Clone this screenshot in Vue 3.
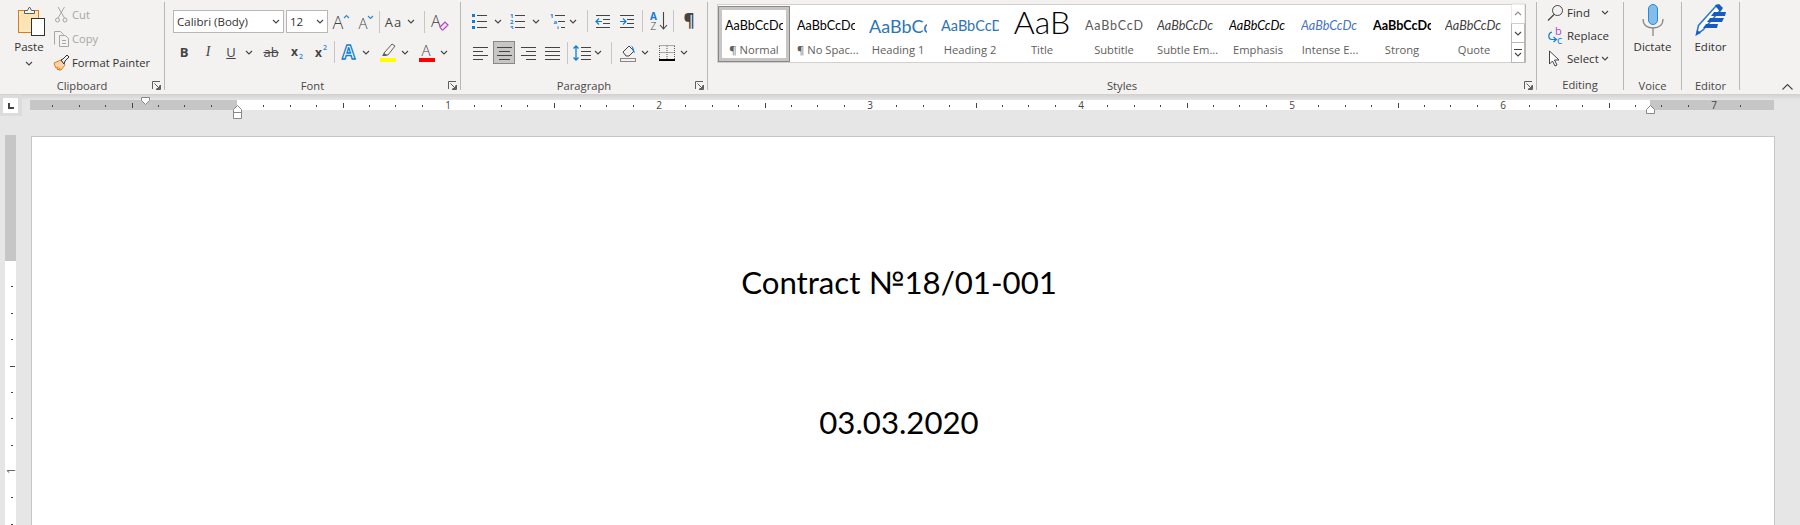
<template>
  <div class="word">
    <svg class="sprite" width="0" height="0">
      <symbol id="chev" viewBox="0 0 8 5"><path d="M1 1l3 3 3-3" fill="none" stroke="#444" stroke-width="1.1"/></symbol>
      <symbol id="launch" viewBox="0 0 9 9"><path d="M.5 8V.5H8M8.5 4v4.5H4M2.5 2.5l5 5M7.5 4.5v3h-3" fill="none" stroke="#605e5c"/></symbol>
    </svg>

    <div class="ribbon">
      <!-- Clipboard -->
      <section class="group clipboard">
        <div class="body clip-body">
          <div class="paste">
            <svg class="paste-icon" width="32" height="31" viewBox="0 0 32 31">
              <rect x="4.5" y="5.5" width="20" height="22" fill="#fdeac3" stroke="#e07a16"/>
              <path d="M7 8h16v17H7z" fill="#fbe3b4"/>
              <path d="M10.5 8.500v-3h3l1.500-3h1l1.500 3h3v3z" fill="#f3f2f1" stroke="#605e5c"/>
              <rect x="17.500" y="13.500" width="13" height="17" fill="#fff" stroke="#323130"/>
            </svg>
            <span>Paste</span>
            <svg class="chev"><use href="#chev"/></svg>
          </div>
          <div class="clip-list">
            <div class="clip-row off">
              <svg width="17" height="17" viewBox="0 0 17 17" fill="none" stroke="#a8a6a4">
                <path d="M5 1l6.500 11M11.500 1L5 12"/><circle cx="4.500" cy="14" r="2"/><circle cx="12" cy="14" r="2"/>
              </svg>
              <span>Cut</span>
            </div>
            <div class="clip-row off">
              <svg width="17" height="17" viewBox="0 0 17 17" fill="#f3f2f1" stroke="#a8a6a4">
                <path d="M1.500 14.500V1.500h6l3 3v3"/><path d="M6.500 16.500v-11h6l3 3v8zM9 10.500h4M9 13.500h4"/>
              </svg>
              <span>Copy</span>
            </div>
            <div class="clip-row">
              <svg width="17" height="17" viewBox="0 0 17 17">
                <path d="M1 9l7-3 4 5-4 5H6l1-2-2 2-1-1 1-2-2 1-1-2z" fill="#fbd3a6" stroke="#e07a16"/>
                <path d="M8 6l2-1 4-4 2 2-4 4-1 3z" fill="#f3f2f1" stroke="#323130"/>
              </svg>
              <span>Format Painter</span>
            </div>
          </div>
        </div>
        <div class="label">Clipboard</div>
        <svg class="launch"><use href="#launch"/></svg>
      </section>

      <!-- Font -->
      <section class="group font">
        <div class="body font-body">
          <div class="row font-r1">
            <div class="combo">Calibri (Body)<svg class="chev"><use href="#chev"/></svg></div>
            <div class="combo size">12<svg class="chev"><use href="#chev"/></svg></div>
            <svg width="20" height="20" viewBox="0 0 20 20">
              <text x="2.500" y="17" class="glyph" font-size="18">A</text>
              <path d="M14 6l2.500-2.500L19 6" fill="none" stroke="#2b88d8" stroke-width="1.200"/>
            </svg>
            <svg width="20" height="20" viewBox="0 0 20 20">
              <text x="4.500" y="17" class="glyph" font-size="15">A</text>
              <path d="M14 4l2.500 2.500L19 4" fill="none" stroke="#2b88d8" stroke-width="1.200"/>
            </svg>
            <i class="sep"></i>
            <div class="aa"><span>Aa</span><svg class="chev"><use href="#chev"/></svg></div>
            <i class="sep"></i>
            <svg width="20" height="20" viewBox="0 0 20 20">
              <text x="1" y="15" class="glyph" font-size="16">A</text>
              <path d="M10 15l5-5 3 3-5 5h-1z" fill="#f3e5f5" stroke="#b146c2" stroke-width="1.200"/>
            </svg>
          </div>
          <div class="row font-r2">
            <span class="t-b">B</span>
            <span class="t-i">I</span>
            <span class="t-u">U</span>
            <svg class="chev"><use href="#chev"/></svg>
            <span class="t-s">ab</span>
            <svg width="18" height="18" viewBox="0 0 18 18">
              <text x="3" y="13" class="glyph bold" font-size="12">x</text>
              <text x="11" y="16" class="sub" font-size="7">2</text>
            </svg>
            <svg width="18" height="18" viewBox="0 0 18 18">
              <text x="3" y="14" class="glyph bold" font-size="12">x</text>
              <text x="11" y="7" class="sub" font-size="7">2</text>
            </svg>
            <i class="sep"></i>
            <i></i>
            <svg width="18" height="18" viewBox="0 0 18 18">
              <text x="1" y="16" class="fx" font-size="19">A</text>
            </svg>
            <svg class="chev"><use href="#chev"/></svg>
            <i></i>
            <svg width="18" height="20" viewBox="0 0 18 20">
              <path d="M5 11l8-9 3 2-7 9H5z" fill="#f3f2f1" stroke="#605e5c"/>
              <path d="M5 11l-2 3h4l1-1z" fill="#605e5c"/>
              <rect x="1" y="16" width="16" height="4" fill="#ff0"/>
            </svg>
            <svg class="chev"><use href="#chev"/></svg>
            <i></i>
            <svg width="18" height="20" viewBox="0 0 18 20">
              <text x="3.500" y="14" class="glyph" font-size="15">A</text>
              <rect x="1" y="16" width="16" height="4" fill="#f00"/>
            </svg>
            <svg class="chev"><use href="#chev"/></svg>
          </div>
        </div>
        <div class="label">Font</div>
        <svg class="launch"><use href="#launch"/></svg>
      </section>

      <!-- Paragraph -->
      <section class="group paragraph">
        <div class="body para-body">
          <div class="row para-r1">
            <svg width="16" height="16" viewBox="0 0 16 16">
              <path d="M0 1h3v3H0zM0 7h3v3H0zM0 13h3v3H0z" fill="#0f7dd1"/>
              <path d="M5 2.500h10M5 8.500h10M5 14.500h10" stroke="#444"/>
            </svg>
            <svg class="chev"><use href="#chev"/></svg>
            <svg width="16" height="16" viewBox="0 0 16 16">
              <text x="0" y="5" class="num" font-size="6">1</text><text x="0" y="11" class="num" font-size="6">2</text><text x="0" y="16.500" class="num" font-size="6">3</text>
              <path d="M5 2.500h10M5 8.500h10M5 14.500h10" stroke="#444"/>
            </svg>
            <svg class="chev"><use href="#chev"/></svg>
            <i></i>
            <svg width="16" height="16" viewBox="0 0 16 16">
              <text x="0" y="5" class="num" font-size="6">1</text><text x="3.500" y="11" class="num" font-size="6">a</text><text x="7" y="16.500" class="num" font-size="6">i</text>
              <path d="M5 2.500h10M8 8.500h7M11 14.500h4" stroke="#444"/>
            </svg>
            <svg class="chev"><use href="#chev"/></svg>
            <i class="sep"></i>
            <svg width="15" height="14" viewBox="0 0 15 14">
              <path d="M1 1.500h14M8 5.500h7M8 9.500h7M1 13.500h14" stroke="#444"/>
              <path d="M7 7.500H1M4 4.500l-3 3 3 3" fill="none" stroke="#0f7dd1" stroke-width="1.200"/>
            </svg>
            <i></i>
            <svg width="15" height="14" viewBox="0 0 15 14">
              <path d="M1 1.500h14M8 5.500h7M8 9.500h7M1 13.500h14" stroke="#444"/>
              <path d="M1 7.500h6M4 4.500l3 3-3 3" fill="none" stroke="#0f7dd1" stroke-width="1.200"/>
            </svg>
            <i class="sep"></i>
            <svg width="18" height="20" viewBox="0 0 18 20">
              <text x="0" y="9" class="sort-a" font-size="10">A</text>
              <text x="0.500" y="19" class="glyph" font-size="10">Z</text>
              <path d="M13.500 1v17M10 14l3.500 4 3.500-4" fill="none" stroke="#444" stroke-width="1.100"/>
            </svg>
            <i class="sep"></i>
            <span class="pilcrow">¶</span>
          </div>
          <div class="row para-r2">
            <svg width="15" height="14" viewBox="0 0 15 14"><path d="M0 1.500h15M0 5.500h10M0 9.500h15M0 13.500h10" stroke="#444"/></svg>
            <i></i>
            <div class="pressed">
              <svg width="15" height="14" viewBox="0 0 15 14"><path d="M0 1.500h15M2 5.500h11M0 9.500h15M2 13.500h11" stroke="#444"/></svg>
            </div>
            <svg width="15" height="14" viewBox="0 0 15 14"><path d="M0 1.500h15M5 5.500h10M0 9.500h15M5 13.500h10" stroke="#444"/></svg>
            <svg width="15" height="14" viewBox="0 0 15 14"><path d="M0 1.500h15M0 5.500h15M0 9.500h15M0 13.500h15" stroke="#444"/></svg>
            <i class="sep"></i>
            <svg width="18" height="16" viewBox="0 0 18 16">
              <path d="M8 2.500h10M8 6.500h10M8 10.500h10M8 14.500h10" stroke="#444"/>
              <path d="M3 1v14M.5 3.500L3 1l2.500 2.500M.5 12.500L3 15l2.500-2.500" fill="none" stroke="#0f7dd1" stroke-width="1.300"/>
            </svg>
            <svg class="chev"><use href="#chev"/></svg>
            <i class="sep"></i>
            <svg width="17" height="18" viewBox="0 0 17 18">
              <path d="M3 8l6-6 5 5-5 5H6z" fill="#f3f2f1" stroke="#444"/>
              <path d="M10 1l3 2 2 6-2-1-1-5z" fill="#0f7dd1"/>
              <rect x=".5" y="14.500" width="15" height="3" fill="#f3f2f1" stroke="#8a8886"/>
            </svg>
            <svg class="chev"><use href="#chev"/></svg>
            <i></i>
            <svg width="16" height="16" viewBox="0 0 16 16">
              <path d="M.5 1v13M15.500 1v13M.5.5h15M.5 7.500h15M8 1v13" stroke="#605e5c" stroke-dasharray="1 1" fill="none"/>
              <path d="M0 15h16" stroke="#000" stroke-width="2"/>
            </svg>
            <svg class="chev"><use href="#chev"/></svg>
          </div>
        </div>
        <div class="label">Paragraph</div>
        <svg class="launch"><use href="#launch"/></svg>
      </section>

      <!-- Styles -->
      <section class="group styles">
        <div class="body styles-body">
          <div class="gallery">
            <div v-for="s in styleItems" :key="s.label" class="style-item" :class="{ current: s.current }">
              <div class="preview"><span :class="s.cls">{{ s.sample }}</span></div>
              <div class="style-name">{{ s.label }}</div>
            </div>
            <div class="scroller">
              <div class="scroll-btn up"><svg class="chev flip"><use href="#chev"/></svg></div>
              <div class="scroll-btn"><svg class="chev"><use href="#chev"/></svg></div>
              <div class="scroll-btn more">
                <svg width="8" height="8" viewBox="0 0 8 8"><path d="M0 .5h8M1 4l3 3 3-3" fill="none" stroke="#444" stroke-width="1.100"/></svg>
              </div>
            </div>
          </div>
        </div>
        <div class="label">Styles</div>
        <svg class="launch"><use href="#launch"/></svg>
      </section>

      <!-- Editing -->
      <section class="group editing">
        <div class="body edit-body">
          <div class="edit-row">
            <svg width="17" height="17" viewBox="0 0 17 17" fill="none" stroke="#444">
              <circle cx="10.500" cy="6.500" r="5"/><path d="M7 10.500l-6 6" stroke-width="1.300"/>
            </svg>
            <span>Find</span>
            <svg class="chev find-chev"><use href="#chev"/></svg>
          </div>
          <div class="edit-row">
            <svg width="17" height="18" viewBox="0 0 17 18">
              <text x="8" y="8" class="rp-b" font-size="11">b</text>
              <text x="10" y="17" class="rp-c" font-size="11">c</text>
              <path d="M5 5C1 6 .500 12 5 12.500h4M6.500 10l3 2.500-3 2.500" fill="none" stroke="#0f7dd1" stroke-width="1.200"/>
            </svg>
            <span>Replace</span>
          </div>
          <div class="edit-row">
            <svg width="17" height="17" viewBox="0 0 17 17">
              <path d="M2.500 1v13l3-3 2.500 5 2-1-2.500-5h4.500z" fill="#fff" stroke="#444"/>
            </svg>
            <span>Select</span>
            <svg class="chev sel-chev"><use href="#chev"/></svg>
          </div>
        </div>
        <div class="label">Editing</div>
      </section>

      <!-- Voice -->
      <section class="group voice">
        <div class="body big-body">
          <svg width="22" height="32" viewBox="0 0 22 32">
            <rect x="6.500" y=".5" width="9" height="20" rx="4.500" fill="#83bdea" stroke="#2b88d8"/>
            <path d="M1 15c0 6 4 9 10 9s10-3 10-9M11 24v8" fill="none" stroke="#8a8886" stroke-width="1.300"/>
          </svg>
          <span>Dictate</span>
        </div>
        <div class="label">Voice</div>
      </section>

      <!-- Editor -->
      <section class="group editor">
        <div class="body big-body">
          <svg width="32" height="32" viewBox="0 0 32 32">
            <path d="M1.500 30.500l2-9L21 2l5 3.500L8 26z" fill="#fff" stroke="#2b7cd3" stroke-width="1.600"/>
            <path d="M20 1l4-1 4 4-3 4z" fill="#185abd"/>
            <path d="M19 8h12l-1 4H16zM15 14h14l-2 4H12zM11 20h12l-1 4H8z" fill="#185abd"/>
            <path d="M1 31l1-5 4 3z" fill="#185abd"/>
          </svg>
          <span>Editor</span>
        </div>
        <div class="label">Editor</div>
      </section>

      <div class="collapse">
        <svg width="11" height="6" viewBox="0 0 11 6"><path d="M.5 5.500l5-5 5 5" fill="none" stroke="#444" stroke-width="1.100"/></svg>
      </div>
    </div>
    <div class="ribbon-shade"></div>

    <div class="ruler-row">
      <div class="tab-stop"><span class="tab-l"></span></div>
      <svg class="h-ruler" width="1744" height="24" viewBox="30 95 1744 24">
        <rect x="30" y="100" width="207" height="10" fill="#c6c6c6"/>
        <rect x="237" y="100" width="1413" height="10" fill="#fff"/>
        <rect x="1650" y="100" width="124" height="10" fill="#c6c6c6"/>
        <rect v-for="t in hTicks" :key="t.x" :x="t.x" :y="t.y" width="1" :height="t.h" fill="#444"/>
        <text v-for="n in 7" :key="n" :x="237 + n * 211" y="109" class="ruler-num">{{ n }}</text>
        <path d="M141.500 97.500h8v3l-4 4-4-4z" fill="#fff" stroke="#8a8886"/>
        <path d="M233.500 118.500v-9l4-4 4 4v9zM233.500 112.500h8" fill="#fff" stroke="#8a8886"/>
        <path d="M1646.500 113.500v-4l4-4 4 4v4z" fill="#fff" stroke="#8a8886"/>
      </svg>
    </div>

    <div class="doc-area">
      <svg class="v-ruler" width="11" height="390" viewBox="0 135 11 390">
        <rect x="0" y="135" width="11" height="126" fill="#c6c6c6"/>
        <rect x="0" y="261" width="11" height="264" fill="#fff"/>
        <rect v-for="t in vTicks" :key="t.y" :x="t.x" :y="t.y" :width="t.w" height="1" fill="#444"/>
        <text x="0" y="0" class="ruler-num" transform="translate(10 471) rotate(-90)">1</text>
      </svg>
      <main class="page">
        <p class="doc-title">Contract №18/01-001</p>
        <p class="doc-date">03.03.2020</p>
      </main>
    </div>
  </div>
</template>

<script setup>
import { computed } from 'vue'

const styleItems = [
  { label: '¶ Normal', sample: 'AaBbCcDc', cls: 'p-normal', current: true },
  { label: '¶ No Spac...', sample: 'AaBbCcDc', cls: 'p-normal' },
  { label: 'Heading 1', sample: 'AaBbCc', cls: 'p-h1' },
  { label: 'Heading 2', sample: 'AaBbCcD', cls: 'p-h2' },
  { label: 'Title', sample: 'AaB', cls: 'p-title' },
  { label: 'Subtitle', sample: 'AaBbCcD', cls: 'p-sub' },
  { label: 'Subtle Em...', sample: 'AaBbCcDc', cls: 'p-subtle' },
  { label: 'Emphasis', sample: 'AaBbCcDc', cls: 'p-em' },
  { label: 'Intense E...', sample: 'AaBbCcDc', cls: 'p-intense' },
  { label: 'Strong', sample: 'AaBbCcDc', cls: 'p-strong' },
  { label: 'Quote', sample: 'AaBbCcDc', cls: 'p-quote' }
]

const step = 211 / 8

// ruler ticks every 1/8 inch, longer at the half inch
const hTicks = computed(() => {
  const out = []
  for (let k = -7; k < 58; k++) {
    if (k % 8 === 0) continue
    const long = k % 4 === 0
    out.push({ x: Math.round(237 + k * step), y: long ? 103 : 105, h: long ? 5 : 2 })
  }
  return out
})

const vTicks = computed(() => {
  const out = []
  for (let k = 1; k < 11; k++) {
    if (k === 8) continue
    const long = k % 4 === 0
    out.push({ x: long ? 5 : 6, y: Math.round(260 + k * step), w: long ? 5 : 2 })
  }
  return out
})
</script>

<style>
html, body {
  margin: 0;
  background: #e6e6e6;
  overflow: hidden;
}
</style>

<style scoped>
.word {
  width: 1800px;
  height: 525px;
  overflow: hidden;
  background: #e6e6e6;
  font-family: "Open Sans", "Noto Sans", sans-serif;
  font-size: 11.2px;
  color: #323130;
}

.sprite {
  position: absolute;
}

.ribbon {
  display: flex;
  height: 94px;
  box-sizing: border-box;
  padding: 2px 0 4px;
  background: #f3f2f1;
}

.ribbon-shade {
  height: 6px;
  background: linear-gradient(#d2d0ce, #e6e6e6);
}

.group {
  position: relative;
  display: flex;
  flex-direction: column;
  box-sizing: border-box;
  border-right: 1px solid #b9b7b5;
}

.clipboard { width: 165px; }
.font { width: 296px; }
.paragraph { width: 247px; }
.styles { width: 829px; }
.editing { width: 87px; }
.voice { width: 58px; }
.editor { width: 58px; }

.body {
  height: 76px;
  box-sizing: border-box;
}

.label {
  height: 12px;
  line-height: 16px;
  text-align: center;
  color: #484644;
}

.launch {
  position: absolute;
  right: 3px;
  bottom: 0;
  width: 9px;
  height: 9px;
}

.chev {
  width: 8px;
  height: 5px;
  flex: none;
}

.flip {
  transform: rotate(180deg);
}

.sep {
  display: block;
  width: 1px;
  height: 22px;
  background: #c8c6c4;
}

.row {
  display: grid;
  align-items: center;
  justify-items: center;
  height: 22px;
}

.glyph {
  fill: #444;
  font-family: "Open Sans", sans-serif;
  font-weight: 300;
}

.glyph.bold {
  font-weight: 700;
}

.sub {
  fill: #2b88d8;
  font-family: "Open Sans", sans-serif;
  font-weight: 600;
}

.num {
  fill: #0f7dd1;
  font-family: "Open Sans", sans-serif;
  font-weight: 700;
}

.rp-b {
  fill: #b146c2;
  font-family: "Open Sans", sans-serif;
}

.rp-c {
  fill: #0f7dd1;
  font-family: "Open Sans", sans-serif;
}

/* clipboard */
.clip-body {
  display: flex;
}

.paste {
  display: flex;
  flex-direction: column;
  align-items: center;
  width: 58px;
  padding-top: 3px;
}

.paste-icon {
  margin-left: 2px;
}

.paste span {
  margin-top: 3px;
  font-size: 11.5px;
  line-height: 16px;
}

.paste .chev {
  margin-top: 6px;
}

.clip-list {
  margin-left: -5px;
}

.clip-row {
  display: flex;
  align-items: center;
  gap: 2px;
  height: 24px;
  white-space: nowrap;
}

.clip-row.off {
  color: #a8a6a4;
}

/* font */
.font-body {
  padding: 8px 0 0 8px;
}

.font-r1 {
  grid-template-columns: 111px 44px 24px 24px 6px 36px 12px 20px;
  height: 23px;
}

.combo {
  display: flex;
  align-items: center;
  justify-content: space-between;
  box-sizing: border-box;
  width: 111px;
  height: 23px;
  padding: 0 3px;
  background: #fff;
  border: 1px solid #b9b7b5;
  font-size: 11.5px;
}

.combo.size {
  width: 42px;
  justify-self: end;
}

.aa {
  display: flex;
  align-items: center;
  gap: 5px;
  font-size: 13px;
  letter-spacing: 1px;
  color: #444;
}

.font-r2 {
  grid-template-columns: 22px 26px 20px 16px 28px 23px 25px 3px 4px 20px 12px 6px 20px 14px 5px 20px 14px;
  margin-top: 8px;
}

.t-b {
  font-size: 13px;
  font-weight: 700;
  color: #444;
}

.t-i {
  font-family: "Liberation Serif", serif;
  font-size: 14px;
  font-style: italic;
  color: #444;
}

.t-u {
  font-size: 13px;
  color: #444;
  text-decoration: underline;
}

.t-s {
  font-size: 13px;
  color: #444;
  text-decoration: line-through;
}

.fx {
  fill: #fff;
  stroke: #0f7dd1;
  stroke-width: 1.300;
  font-family: "Open Sans", sans-serif;
  font-weight: 700;
}

/* paragraph */
.para-body {
  padding: 8px 0 0 8px;
}

.para-r1 {
  grid-template-columns: 21px 15px 26px 10px 9px 16px 14px 14px 16px 8px 17px 14px 19px 10px 22px;
}

.para-r2 {
  grid-template-columns: 22px 2px 22px 26px 22px 8px 22px 10px 16px 18px 16px 2px 24px 10px;
  margin-top: 9px;
}

.sort-a {
  fill: #0f7dd1;
  font-family: "Open Sans", sans-serif;
  font-weight: 700;
}

.pilcrow {
  font-size: 17px;
  font-weight: 700;
  line-height: 20px;
  color: #444;
}

.pressed {
  display: flex;
  align-items: center;
  justify-content: center;
  box-sizing: border-box;
  width: 22px;
  height: 23px;
  background: #c8c6c4;
  border: 1px solid #8a8886;
}

/* styles gallery */
.styles-body {
  padding: 2px 0 0 9px;
}

.gallery {
  display: flex;
  box-sizing: border-box;
  width: 809px;
  height: 59px;
  padding-top: 1px;
  background: #fff;
  border: 1px solid #d2d0ce;
  border-right-color: #b9b7b5;
}

.style-item {
  box-sizing: border-box;
  width: 72px;
  height: 56px;
  padding: 6px 7px 0;
  text-align: center;
}

.style-item.current {
  border: 1px solid #8a8886;
  outline: 3px solid #c8c6c4;
  outline-offset: -4px;
  padding: 5px 6px 0;
}

.preview {
  display: flex;
  align-items: flex-end;
  height: 24px;
  overflow: hidden;
  font-family: Lato, "Open Sans", sans-serif;
  line-height: 20px;
  white-space: nowrap;
  text-align: left;
}

.style-name {
  margin-top: 6px;
  line-height: 16px;
  color: #605e5c;
  white-space: nowrap;
}

.p-normal { font-size: 12.600px; color: #000; }
.p-h1 { font-size: 18px; color: #2e74b5; }
.p-h2 { font-size: 14.500px; color: #2e74b5; }
.p-title { font-size: 32px; font-weight: 300; color: #000; line-height: 24px; margin: 0 auto 2px; }
.p-sub { font-size: 12.500px; letter-spacing: .8px; color: #5a5a5a; }
.p-subtle { font-size: 12.600px; font-style: italic; color: #404040; }
.p-em { font-size: 12.600px; font-style: italic; color: #000; }
.p-intense { font-size: 12.600px; font-style: italic; color: #4472c4; }
.p-strong { font-size: 12.600px; font-weight: 700; color: #000; }
.p-quote { font-size: 12.600px; font-style: italic; color: #404040; }

.scroller {
  display: flex;
  flex-direction: column;
  margin: -2px 0 -1px 1px;
  flex: 1;
}

.scroll-btn {
  display: flex;
  align-items: center;
  justify-content: center;
  flex: 1;
  background: #fff;
  border: 1px solid #b9b7b5;
  margin-top: -1px;
}

.scroll-btn.up {
  border-color: #e1dfdd;
  opacity: .6;
}

/* editing */
.edit-body {
  margin-top: -1px;
  padding-left: 10px;
}

.edit-row {
  display: flex;
  align-items: center;
  gap: 3px;
  height: 23px;
  font-size: 11.5px;
}

.find-chev {
  margin-left: 8px;
}

.sel-chev {
  margin-left: -1px;
}

/* big buttons */
.big-body {
  display: flex;
  flex-direction: column;
  align-items: center;
  padding-top: 2px;
  gap: 3px;
}

.big-body span {
  font-size: 11.5px;
  line-height: 16px;
}

.collapse {
  flex: 1;
  display: flex;
  align-items: flex-end;
  justify-content: flex-end;
  padding-right: 7px;
}

/* rulers */
.ruler-row {
  display: flex;
  height: 40px;
  margin-top: -5px;
}

.tab-stop {
  display: flex;
  align-items: center;
  box-sizing: border-box;
  width: 22px;
  height: 21px;
  padding-left: 3px;
  background: #dcdcdc;
}

.tab-l {
  display: block;
  width: 15px;
  height: 15px;
  background: linear-gradient(#444, #444) 5px 9px / 6px 2px no-repeat,
    linear-gradient(#444, #444) 5px 5px / 2px 6px no-repeat,
    #fff;
}

.h-ruler {
  margin-left: 8px;
  overflow: visible;
}

.ruler-num {
  fill: #444;
  font-size: 10px;
  text-anchor: middle;
}

.doc-area {
  display: flex;
  align-items: flex-start;
  padding-left: 5px;
}

.v-ruler {
  flex: none;
}

.page {
  box-sizing: border-box;
  width: 1744px;
  height: 400px;
  margin: 1px 0 0 15px;
  padding: 127px 8px 0 0;
  background: #fff;
  border: 1px solid #c6c6c6;
  border-bottom: 0;
  font-family: Lato, "Open Sans", sans-serif;
  font-size: 31.2px;
  line-height: 36px;
  color: #000;
  text-align: center;
}

.page p {
  margin: 0;
}

.page .doc-date {
  margin-top: 104px;
}
</style>
